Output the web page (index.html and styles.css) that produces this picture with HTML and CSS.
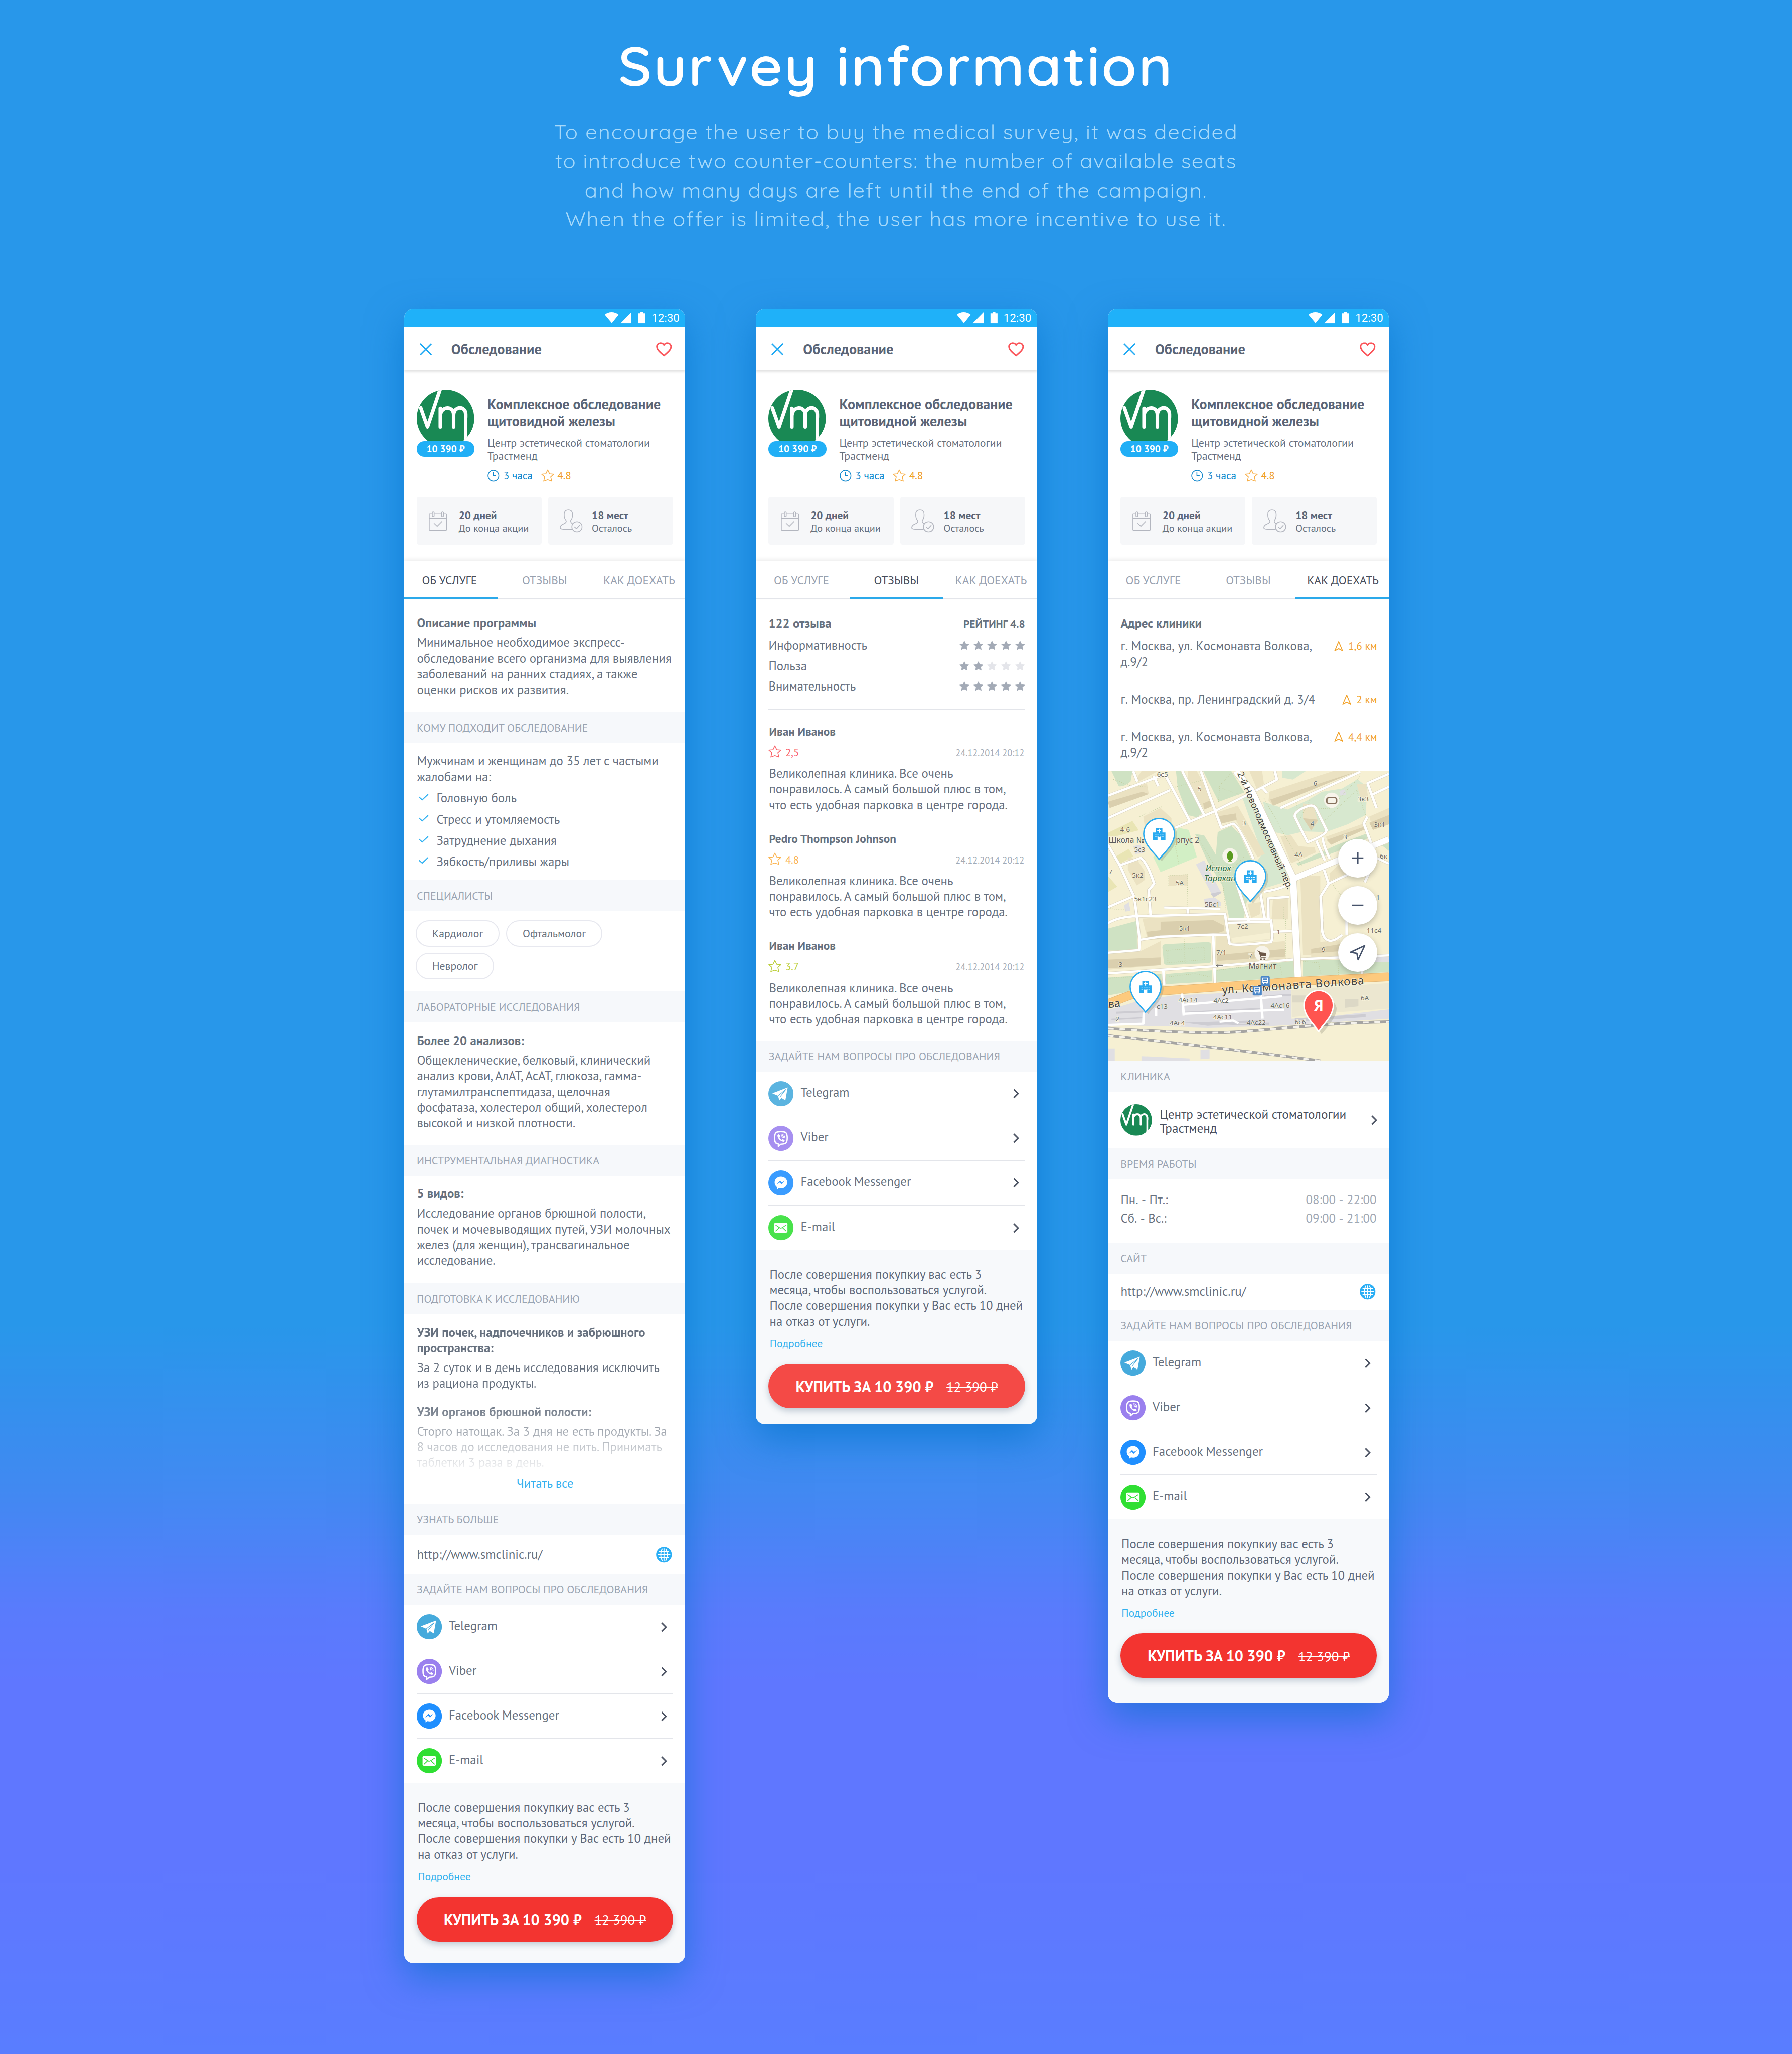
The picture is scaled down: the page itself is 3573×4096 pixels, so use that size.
FILE: index.html
```html
<!DOCTYPE html>
<html lang="ru">
<head>
<meta charset="utf-8">
<title>Survey information</title>
<link rel="stylesheet" href="styles.css">
</head>
<body>
<svg class="sprite" aria-hidden="true">
  <symbol id="i-status" viewBox="0 0 87 24"><path fill="#fff" d="M0 5.5C8-1.8 21-1.8 29.5 5.5L15 23.5ZM57 0V24H33.5ZM71.8 2.5H76.3V0h6v2.5H87V24H71.8Z"/></symbol>
  <symbol id="i-close" viewBox="0 0 26 26"><path fill="none" stroke="#1fa9f3" stroke-width="3" d="M1 1L25 25M25 1L1 25"/></symbol>
  <symbol id="i-heart" viewBox="0 0 34 31"><path fill="none" stroke="#fa5459" stroke-width="3.2" stroke-linejoin="round" d="M17 29C9 21.5 1.8 16.5 1.8 9.7A7.8 7.8 0 0 1 9.8 1.8C13 1.8 15.5 3.3 17 6C18.5 3.3 21 1.8 24.2 1.8A7.8 7.8 0 0 1 32.2 9.7C32.2 16.5 25 21.5 17 29Z"/></symbol>
  <symbol id="i-vm" viewBox="0 0 123 123"><clipPath id="disc"><circle cx="61.5" cy="61.5" r="61.5"/></clipPath><g clip-path="url(#disc)"><rect width="123" height="123" fill="#198954"/><path fill="none" stroke="#fff" stroke-width="7.6" stroke-linecap="round" stroke-linejoin="round" d="M8.5 39L23 80L51 -3M50.5 80V40M50.5 56C52 34 79 34 79 54V80M79 54C80 34 105 34 105 53V126"/><path fill="#fff" d="M101 104L124 88V123H101Z"/><path fill="#198954" d="M108.5 60H124V84L108.5 101Z"/></g></symbol>
  <symbol id="i-clock" viewBox="0 0 26 26"><circle cx="13" cy="13" r="11.8" fill="none" stroke="#1288cd" stroke-width="1.7"/><path fill="none" stroke="#1288cd" stroke-width="1.7" d="M12.5 5.5V13H18.5"/></symbol>
  <symbol id="i-star" viewBox="0 0 28 27"><path fill="none" stroke="currentColor" stroke-width="1.7" stroke-linejoin="round" d="M14 1.5L18 9.6L27 10.4L20.4 16.3L22.6 25.4L14 22.3L5.4 25.4L7.6 16.3L1 10.4L10 9.6Z"/></symbol>
  <symbol id="i-solid" viewBox="0 0 21 20"><path fill="currentColor" stroke="currentColor" stroke-linejoin="round" d="M10.5 .8L13.5 6.8L20.3 7.6L15.3 12.2L16.6 19L10.5 16.2L4.4 19L5.7 12.2L.7 7.6L7.5 6.8Z"/></symbol>
  <symbol id="i-calendar" viewBox="0 0 39 41"><g fill="none" stroke="#b3b6bf" stroke-width="1.7"><path d="M7 4.5H2Q1 4.5 1 5.5V39Q1 40 2 40H37Q38 40 38 39V5.5Q38 4.5 37 4.5H32M12 4.5H27M1 14.5H38"/><rect x="7.5" y="1" width="4" height="10" rx="2"/><rect x="27.5" y="1" width="4" height="10" rx="2"/><path d="M11 25L18 31.5L28.5 21"/></g></symbol>
  <symbol id="i-person" viewBox="0 0 49 49"><g fill="none" stroke="#b3b6bf" stroke-width="1.7" stroke-linejoin="round"><path d="M26.5 42.5H13C6 42.5 1 41.5 1 39C1 35.5 3 33 8 31C13 29 15 26 13.5 23.5C10.5 20 9.5 16 9.5 11C9.5 4 13 1 18.5 1C24 1 27.5 4 27.5 11C27.5 16 26.5 20 23.5 23.5C23 27 25 29 27.5 30.5"/><circle cx="37" cy="37" r="11"/><path d="M31.5 37L36 41L43 33.5"/></g></symbol>
  <symbol id="i-check" viewBox="0 0 21 15"><path fill="none" stroke="#35b3f2" stroke-width="2.4" d="M.6 7L7.5 13L20.3 1"/></symbol>
  <symbol id="i-chevron" viewBox="0 0 13 21"><path fill="none" stroke="#4d5464" stroke-width="3.2" d="M1.5 1.5L10.5 10.5L1.5 19.5"/></symbol>
  <symbol id="i-globe" viewBox="0 0 34 34"><circle cx="17" cy="17" r="16.8" fill="#29aef5"/><path fill="none" stroke="#fff" stroke-width="2" d="M17 3.5V30.500M3.500 17H30.500M6 10.500H28M6 23.500H28M13.500 4C9 11 9 23 13.500 30M20.500 4C25 11 25 23 20.500 30"/></symbol>
  <symbol id="i-telegram" viewBox="0 0 54 54"><circle cx="27" cy="27" r="27" fill="#45aadc"/><path fill="#fff" d="M8.500 26L41.500 13.500L36.500 41L28 36L23.500 41.500L20.800 31.500Z"/><path stroke="#45aadc" stroke-width="1.300" fill="none" d="M20.500 31.500L37.500 18L24.500 34.500"/></symbol>
  <symbol id="i-viber" viewBox="0 0 54 54"><circle cx="27" cy="27" r="27" fill="#9a80ee"/><path fill="none" stroke="#fff" stroke-width="2.800" stroke-linejoin="round" d="M27 12.500C38 12.500 40.500 15 40.500 26C40.500 36.500 38 39.500 27 39.500L21.500 44V39C15 38 13.500 35 13.500 26C13.500 15 16 12.500 27 12.500Z"/><path fill="#fff" d="M20 19.500C21.500 17.800 23 18 24 19.500L25.500 22C26 23 25 24 24 24.800C25 28 26.500 29.500 29 30.500C30 29 31 28.500 32.500 29.500L34.500 31C35.800 32 34.500 34 33 34.500C26 34 19.500 27 19.500 21Z"/><path fill="none" stroke="#fff" stroke-width="1.300" d="M27.500 18C32.500 18 35.500 21 35.500 26.500M28 20.500C31 20.500 33 22.500 33 26M28.500 23C30 23 30.500 24 30.500 25.500"/></symbol>
  <symbol id="i-messenger" viewBox="0 0 54 54"><circle cx="27" cy="27" r="27" fill="#1f8fff"/><path fill="#fff" d="M27 13.500C35 13.500 40.500 19 40.500 26C40.500 33 35 38.500 27 38.500C25.500 38.500 24 38.300 22.800 38L19 40.500L18.800 36C15.500 33.600 13.500 30 13.500 26C13.500 19 19 13.500 27 13.500Z"/><path fill="#1f8fff" d="M17.500 30L25 22L29 26L36 22L28.500 30L24.500 26Z"/></symbol>
  <symbol id="i-email" viewBox="0 0 54 54"><circle cx="27" cy="27" r="27" fill="#2fdf33"/><rect x="12.500" y="17" width="28.500" height="20.500" rx="2.500" fill="#fff"/><path fill="none" stroke="#2fdf33" stroke-width="1.700" d="M15.500 21C20 24 24 28 26.800 28C29.500 28 34 24 38.500 21M15.500 34.500L23 27.500M38.500 34.500L31 27.500"/></symbol>
  <symbol id="i-nav" viewBox="0 0 20 24"><path fill="none" stroke="#f2a32c" stroke-width="2" stroke-linejoin="round" d="M10 2L18.500 22L10 17.500L1.500 22Z"/></symbol>
  <symbol id="i-pin" viewBox="0 0 74 94"><path fill="#8a8a78" opacity=".3" d="M40 93C29 79 6 60 6 38A33 33 0 0 1 73 38C73 60 51 79 40 93Z"/><path fill="#fff" stroke="#29aaf0" stroke-width="2.800" stroke-linejoin="round" d="M34.500 89C24 75 1.500 57 1.500 34.500A33 33 0 0 1 67.500 34.500C67.500 57 45 75 34.500 89Z"/><path fill="#29aaf0" d="M21 31.500H27.500V22H41.500V31.500H48V48.500H38V42H31V48.500H21Z"/><path fill="none" stroke="#fff" stroke-width="2.200" d="M34.500 23.500V32M30.300 27.700H38.700"/><path stroke="#fff" stroke-width="1.500" stroke-dasharray="3.500 1.500" d="M25.500 37H44M25.500 41H44"/></symbol>
</svg>

<header class="hero">
  <h1 class="hero-title">Survey information</h1>
  <p class="hero-text"><span>To encourage the user to buy the medical survey, it was decided</span> <span class="snug">to introduce two counter-counters: the number of available seats</span> <span>and how many days are left until the end of the campaign.</span> <span>When the offer is limited, the user has more incentive to use it.</span></p>
</header>

<main class="phones">
  <article class="phone">
    <div class="status"><svg class="status-icons"><use href="#i-status"/></svg><span>12:30</span></div>
    <div class="appbar"><svg class="close"><use href="#i-close"/></svg><h2>Обследование</h2><svg class="heart"><use href="#i-heart"/></svg></div>
    <section class="summary">
      <div class="offer">
        <div class="brand"><svg class="brand-logo"><use href="#i-vm"/></svg><span class="price">10 390 ₽</span></div>
        <div class="offer-info"><h3>Комплексное обследование<br>щитовидной железы</h3><p>Центр эстетической стоматологии<br>Трастменд</p>
          <div class="meta"><svg class="clock"><use href="#i-clock"/></svg><span class="hours">3 часа</span><svg class="star"><use href="#i-star"/></svg><span>4.8</span></div></div>
      </div>
      <div class="stats">
        <div class="stat"><svg class="cal"><use href="#i-calendar"/></svg><div><b>20 дней</b><span>До конца акции</span></div></div>
        <div class="stat seats"><svg class="person"><use href="#i-person"/></svg><div><b>18 мест</b><span>Осталось</span></div></div>
      </div>
    </section>
    <nav class="tabs"><a class="on">ОБ УСЛУГЕ</a><a>ОТЗЫВЫ</a><a>КАК ДОЕХАТЬ</a></nav>
    <section class="block intro"><h4>Описание программы</h4><p>Минимальное необходимое экспресс-<br>обследование всего организма для выявления<br>заболеваний на ранних стадиях, а также<br>оценки рисков их развития.</p></section>
    <h5 class="band">КОМУ ПОДХОДИТ ОБСЛЕДОВАНИЕ</h5>
    <section class="block audience"><p>Мужчинам и женщинам до 35 лет с частыми<br>жалобами на:</p>
      <ul class="checks">
        <li><svg class="check"><use href="#i-check"/></svg>Головную боль</li>
        <li><svg class="check"><use href="#i-check"/></svg>Стресс и утомляемость</li>
        <li><svg class="check"><use href="#i-check"/></svg>Затруднение дыхания</li>
        <li><svg class="check"><use href="#i-check"/></svg>Зябкость/приливы жары</li>
      </ul></section>
    <h5 class="band">СПЕЦИАЛИСТЫ</h5>
    <section class="chips"><span>Кардиолог</span><span>Офтальмолог</span><span>Невролог</span></section>
    <h5 class="band">ЛАБОРАТОРНЫЕ ИССЛЕДОВАНИЯ</h5>
    <section class="block lab"><h4>Более 20 анализов:</h4><p>Общекленические, белковый, клинический<br>анализ крови, АлАТ, АсАТ, глюкоза, гамма-<br>глутамилтранспептидаза, щелочная<br>фосфатаза, холестерол общий, холестерол<br>высокой и низкой плотности.</p></section>
    <h5 class="band">ИНСТРУМЕНТАЛЬНАЯ ДИАГНОСТИКА</h5>
    <section class="block kinds"><h4>5 видов:</h4><p>Исследование органов брюшной полости,<br>почек и мочевыводящих путей, УЗИ молочных<br>желез (для женщин), трансвагинальное<br>исследование.</p></section>
    <h5 class="band">ПОДГОТОВКА К ИССЛЕДОВАНИЮ</h5>
    <section class="block prep"><div class="fade"><h4>УЗИ почек, надпочечников и забрюшного<br>пространства:</h4><p>За 2 суток и в день исследования исключить<br>из рациона продукты.</p><h4 class="second">УЗИ органов брюшной полости:</h4><p>Сторго натощак. За 3 дня не есть продукты. За<br>8 часов до исследования не пить. Принимать<br>таблетки 3 раза в день.</p></div><a class="more">Читать все</a></section>
    <h5 class="band">УЗНАТЬ БОЛЬШЕ</h5>
    <div class="site tall"><span>http://www.smclinic.ru/</span><svg class="globe"><use href="#i-globe"/></svg></div>
    <h5 class="band">ЗАДАЙТЕ НАМ ВОПРОСЫ ПРО ОБСЛЕДОВАНИЯ</h5>
    <ul class="contacts">
      <li><svg class="app"><use href="#i-telegram"/></svg><span>Telegram</span><svg class="chevron"><use href="#i-chevron"/></svg></li>
      <li><svg class="app"><use href="#i-viber"/></svg><span>Viber</span><svg class="chevron"><use href="#i-chevron"/></svg></li>
      <li><svg class="app"><use href="#i-messenger"/></svg><span>Facebook Messenger</span><svg class="chevron"><use href="#i-chevron"/></svg></li>
      <li><svg class="app"><use href="#i-email"/></svg><span>E-mail</span><svg class="chevron"><use href="#i-chevron"/></svg></li>
    </ul>
    <footer class="buy"><p>После совершения покупкиу вас есть 3<br>месяца, чтобы воспользоваться услугой.<br>После совершения покупки у Вас есть 10 дней<br>на отказ от услуги.</p><a class="details">Подробнее</a><button class="cta"><b>КУПИТЬ ЗА 10 390 ₽</b><s>12 390 ₽</s></button></footer>
  </article>

  <article class="phone short">
    <div class="status"><svg class="status-icons"><use href="#i-status"/></svg><span>12:30</span></div>
    <div class="appbar"><svg class="close"><use href="#i-close"/></svg><h2>Обследование</h2><svg class="heart"><use href="#i-heart"/></svg></div>
    <section class="summary">
      <div class="offer">
        <div class="brand"><svg class="brand-logo"><use href="#i-vm"/></svg><span class="price">10 390 ₽</span></div>
        <div class="offer-info"><h3>Комплексное обследование<br>щитовидной железы</h3><p>Центр эстетической стоматологии<br>Трастменд</p>
          <div class="meta"><svg class="clock"><use href="#i-clock"/></svg><span class="hours">3 часа</span><svg class="star"><use href="#i-star"/></svg><span>4.8</span></div></div>
      </div>
      <div class="stats">
        <div class="stat"><svg class="cal"><use href="#i-calendar"/></svg><div><b>20 дней</b><span>До конца акции</span></div></div>
        <div class="stat seats"><svg class="person"><use href="#i-person"/></svg><div><b>18 мест</b><span>Осталось</span></div></div>
      </div>
    </section>
    <nav class="tabs"><a>ОБ УСЛУГЕ</a><a class="on">ОТЗЫВЫ</a><a>КАК ДОЕХАТЬ</a></nav>
    <section class="ratings">
      <div class="rating-head"><h4>122 отзыва</h4><b>РЕЙТИНГ 4.8</b></div>
      <div class="rating"><span>Информативность</span><div class="stars"><svg><use href="#i-solid"/></svg><svg><use href="#i-solid"/></svg><svg><use href="#i-solid"/></svg><svg><use href="#i-solid"/></svg><svg><use href="#i-solid"/></svg></div></div>
      <div class="rating"><span>Польза</span><div class="stars"><svg><use href="#i-solid"/></svg><svg><use href="#i-solid"/></svg><svg class="off"><use href="#i-solid"/></svg><svg class="off"><use href="#i-solid"/></svg><svg class="off"><use href="#i-solid"/></svg></div></div>
      <div class="rating"><span>Внимательность</span><div class="stars"><svg><use href="#i-solid"/></svg><svg><use href="#i-solid"/></svg><svg><use href="#i-solid"/></svg><svg><use href="#i-solid"/></svg><svg><use href="#i-solid"/></svg></div></div>
    </section>
    <section class="reviews">
      <div class="review"><h6>Иван Иванов</h6><div class="review-meta low"><svg class="star"><use href="#i-star"/></svg><span>2,5</span><time>24.12.2014 20:12</time></div><p>Великолепная клиника. Все очень<br>понравилось. А самый большой плюс в том,<br>что есть удобная парковка в центре города.</p></div>
      <div class="review"><h6>Pedro Thompson Johnson</h6><div class="review-meta high"><svg class="star"><use href="#i-star"/></svg><span>4.8</span><time>24.12.2014 20:12</time></div><p>Великолепная клиника. Все очень<br>понравилось. А самый большой плюс в том,<br>что есть удобная парковка в центре города.</p></div>
      <div class="review"><h6>Иван Иванов</h6><div class="review-meta mid"><svg class="star"><use href="#i-star"/></svg><span>3.7</span><time>24.12.2014 20:12</time></div><p>Великолепная клиника. Все очень<br>понравилось. А самый большой плюс в том,<br>что есть удобная парковка в центре города.</p></div>
    </section>
    <h5 class="band">ЗАДАЙТЕ НАМ ВОПРОСЫ ПРО ОБСЛЕДОВАНИЯ</h5>
    <ul class="contacts">
      <li><svg class="app"><use href="#i-telegram"/></svg><span>Telegram</span><svg class="chevron"><use href="#i-chevron"/></svg></li>
      <li><svg class="app"><use href="#i-viber"/></svg><span>Viber</span><svg class="chevron"><use href="#i-chevron"/></svg></li>
      <li><svg class="app"><use href="#i-messenger"/></svg><span>Facebook Messenger</span><svg class="chevron"><use href="#i-chevron"/></svg></li>
      <li><svg class="app"><use href="#i-email"/></svg><span>E-mail</span><svg class="chevron"><use href="#i-chevron"/></svg></li>
    </ul>
    <footer class="buy"><p>После совершения покупкиу вас есть 3<br>месяца, чтобы воспользоваться услугой.<br>После совершения покупки у Вас есть 10 дней<br>на отказ от услуги.</p><a class="details">Подробнее</a><button class="cta"><b>КУПИТЬ ЗА 10 390 ₽</b><s>12 390 ₽</s></button></footer>
  </article>

  <article class="phone route">
    <div class="status"><svg class="status-icons"><use href="#i-status"/></svg><span>12:30</span></div>
    <div class="appbar"><svg class="close"><use href="#i-close"/></svg><h2>Обследование</h2><svg class="heart"><use href="#i-heart"/></svg></div>
    <section class="summary">
      <div class="offer">
        <div class="brand"><svg class="brand-logo"><use href="#i-vm"/></svg><span class="price">10 390 ₽</span></div>
        <div class="offer-info"><h3>Комплексное обследование<br>щитовидной железы</h3><p>Центр эстетической стоматологии<br>Трастменд</p>
          <div class="meta"><svg class="clock"><use href="#i-clock"/></svg><span class="hours">3 часа</span><svg class="star"><use href="#i-star"/></svg><span>4.8</span></div></div>
      </div>
      <div class="stats">
        <div class="stat"><svg class="cal"><use href="#i-calendar"/></svg><div><b>20 дней</b><span>До конца акции</span></div></div>
        <div class="stat seats"><svg class="person"><use href="#i-person"/></svg><div><b>18 мест</b><span>Осталось</span></div></div>
      </div>
    </section>
    <nav class="tabs"><a>ОБ УСЛУГЕ</a><a>ОТЗЫВЫ</a><a class="on">КАК ДОЕХАТЬ</a></nav>
    <section class="addresses"><h4>Адрес клиники</h4>
      <div class="address"><p>г. Москва, ул. Космонавта Волкова,<br>д.9/2</p><span class="km"><svg class="nav"><use href="#i-nav"/></svg>1,6 км</span></div>
      <div class="address"><p>г. Москва, пр. Ленинградский д. 3/4</p><span class="km"><svg class="nav"><use href="#i-nav"/></svg>2 км</span></div>
      <div class="address"><p>г. Москва, ул. Космонавта Волкова,<br>д.9/2</p><span class="km"><svg class="nav"><use href="#i-nav"/></svg>4,4 км</span></div>
    </section>
    <div class="map">
      <svg class="city" viewBox="10 8 1548 1862" preserveAspectRatio="none">
<rect x="10" y="8" width="1548" height="1862" fill="#f6f0d3"/>
<g fill="#cfe2c3">
<path d="M30 8H145L135 75Q100 110 70 105Z"/><path d="M385 8H412L530 280L500 305L450 290L395 120Z"/><path d="M535 8H690L762 145L620 205Z"/>
<path d="M490 412L540 420L605 545L615 400L690 360L735 410L850 700L770 860L760 960H680L640 740L560 590Z"/>
<path d="M10 1020L170 970V1150L10 1170Z"/><path d="M310 1140Q310 1122 330 1120L560 1106Q578 1108 578 1125V1225Q578 1240 560 1242L335 1254Q318 1252 318 1236Z"/>
<path d="M10 1335L305 1312V1388L130 1425L10 1450Z"/><path d="M328 1312L585 1288V1360L328 1378Z"/><path d="M606 1285L1036 1228V1335L606 1362Z"/><path d="M1085 1222L1558 1225V1300L1085 1328Z"/>
<path d="M1050 600L1270 482L1450 402V435L1270 525L1060 615Z"/><path d="M1520 485L1558 470V520Z"/>
</g>
<g fill="#d7e8cf"><path d="M750 175L800 170L1000 650L985 720L880 758L830 590L860 540Z"/><path d="M865 205L1000 255L1110 195L1190 140L1300 120L1385 60L1440 110L1430 290L1330 350L1210 400L1090 395L1000 420L930 400L880 280Z"/><path d="M970 8H1100L1030 62L970 50Z"/></g>
<path d="M260 560L400 372L455 385L500 560L300 656Z" fill="#d2efc5"/>
<path d="M10 405L145 328L180 388L60 425H10ZM55 555L125 508L150 555L80 600ZM10 680L62 750L10 785Z" fill="#e9e5b4"/>
<g fill="#ebe2c2">
<path d="M10 165L225 85L235 155L20 245ZM165 60L195 8H285L180 75Z"/><path d="M450 8H500L585 190L580 235L540 255L450 80Z"/><path d="M900 140L1250 8H1385L1270 62L920 230L895 200Z"/><path d="M790 8H860L870 90L830 120Z"/>
<path d="M607 275L725 230L875 540L835 560L715 325L635 345Z"/><path d="M1085 215L1140 225L1168 335L1130 390L1085 310Z"/><path d="M1380 90H1430L1445 180L1410 212Z"/><path d="M1450 300L1558 245V350L1470 385Z"/><path d="M1210 430L1410 348L1430 380L1240 480Z"/><path d="M960 425L1020 420L1060 490L1150 498L1155 530L1020 600Z"/><path d="M120 560L170 575L212 650L215 705L170 742L120 640Z"/><path d="M205 300L300 245L360 310V370L215 380Z"/><path d="M780 860L848 850L850 925L800 952Z"/><path d="M920 822H1002V960H912Z"/><path d="M1070 680H1180V1190H1085Z"/><path d="M200 955L650 930L660 1050L230 1095Z"/><path d="M345 678L450 670V742L345 745Z"/><path d="M1230 665L1290 600L1350 650L1235 712Z"/><path d="M605 1070L670 1065L690 1130L985 1100L990 1215L605 1250ZM10 1160L190 1165L300 1100V1255L10 1285ZM1130 1110L1290 1095V1200L1130 1205Z"/>
</g>
<g fill="#dacfae"><path d="M10 205L200 140L235 155L20 245Z"/><path d="M905 190L1385 8L1270 62L920 230Z"/><path d="M607 300L715 280L720 320L635 345Z"/><path d="M535 215L585 190L580 235L540 255Z"/><path d="M225 1040L300 1030V975L590 965L650 1000V1035L590 1058L230 1090Z"/><path d="M610 1190L990 1150L985 1200L610 1228ZM10 1220L300 1205V1255L10 1275ZM1130 1150L1290 1120V1165L1130 1180Z"/><path d="M1450 340L1558 290V350L1470 385ZM1085 310L1168 320L1130 390Z"/><path d="M1215 450L1430 362V380L1240 480Z"/></g>
<path d="M670 990L905 985L915 1090L690 1120Z" fill="#eee8cb"/><path d="M690 1080L905 1045V1085L700 1112Z" fill="#f6f0d3"/>
<g fill="#e0dfe3"><path d="M495 607L540 580L635 790L592 820Z"/><path d="M540 828L600 820L632 850V875L545 880Z"/><path d="M10 1545L180 1485L370 1450L1022 1415V1600L1200 1590L1558 1540V1600L900 1648L560 1656L300 1648L10 1640Z"/><path d="M520 1800L570 1795V1855L520 1860ZM195 1840L460 1855V1870H195ZM10 1790H48V1870H10ZM1285 135L1315 125L1322 158L1292 166ZM150 490L190 480L205 535L160 540ZM100 870L125 850L135 905L105 910ZM1470 1200L1558 1185V1235H1470Z"/></g>
<g fill="#cdccd2"><path d="M430 1555L850 1530V1542L430 1562ZM55 1555L205 1548V1560L55 1568ZM430 1625L860 1610V1620L560 1645ZM30 1600L200 1590V1598L30 1610ZM640 1640L900 1625V1640ZM870 1450L1020 1440V1452L870 1462ZM1040 1598L1430 1570V1590L1040 1620ZM575 795L635 780V790L592 820Z"/></g>
<path d="M1022 1415L1558 1370V1535L1260 1560L1025 1590Z" fill="#ece7d0"/><path d="M1025 1450H1100V1495H1025ZM1315 1475H1390V1520L1315 1530Z" fill="#dcd8c6"/>
<g class="paths"><path d="M380 110L550 60M40 60L130 100L230 110M185 300L310 235M620 205L625 100L690 20M620 110L740 160M1050 205V240L1230 250L1400 40M1060 330L1130 180M1200 330L1380 130L1430 290M870 180L1080 620M640 700L660 900M345 745V680L450 672L445 900M380 480L400 600M500 420L640 700L760 560M1250 740L1310 830M990 960V1230M1085 1230L1170 1240L1185 1320M1280 1240V1330M330 1160L540 1140V1220L340 1240V1160M430 1090L435 1240M345 1330L490 1310L570 1330M610 1290L730 1270L960 1260L970 1320M300 1400H1030M10 1340L300 1318M980 880V960M10 890L110 900"/></g>
<g class="road"><path id="streets" d="M10 165L285 45L330 25M10 310L352 130M150 8L172 75M262 38L288 105M320 20L462 330M420 8L540 290M522 8L635 372L700 345Q730 352 812 572M380 372L590 270L860 112L942 62L930 8M860 112L888 148M960 245L1400 12M1110 465L1040 300Q1036 262 1120 230Q1150 222 1162 262L1214 385Q1218 415 1110 465ZM1158 455L1206 582M1198 435Q1185 455 1232 570M1440 300L1420 345L1460 470M1440 85L1490 245M1440 85L1558 25M1460 162L1558 108M720 730L785 960M870 782Q960 765 1010 735M850 790L875 960M895 960L893 825L1010 815M10 480L75 612L155 815L172 960L185 1092L300 1072L590 1058L668 1060M78 612L190 565Q225 590 265 730L235 772L245 935M10 882L150 812M10 985Q70 942 172 940L655 925L680 1115Q690 1135 905 1108Q925 1100 908 960M320 884L630 892M450 890V922M10 1175L182 1158L185 1092M590 1058L600 1375M785 960V975M672 982L908 975M315 1288L320 1385M915 1040L1030 1035M1190 960Q1180 1092 1235 1098Q1260 1100 1300 1060M1325 960V1060M1410 1290V1320M1198 632L1226 730L1182 812L1188 960M1226 730L1350 662M1425 722L1450 655M1480 560L1558 602M670 960H905"/></g>
<use href="#streets" class="road-fill"/>
<path d="M10 1308L600 1262L1040 1218L1558 1192" class="road"/>
<path d="M10 1308L600 1262L1040 1218L1558 1192" class="road-fill"/>
<path d="M715 8L800 130L1030 690L1058 1345M1030 700L1558 445" class="avenue-case"/><path d="M715 8L800 130L1030 690L1058 1345M1030 700L1558 445" class="avenue"/>
<path d="M0 1508L130 1450Q160 1440 300 1422L1040 1360L1558 1330" class="main-case"/><path d="M0 1508L130 1450Q160 1440 300 1422L1040 1360L1558 1330" class="main"/>
<path d="M418 1438L428 1580M428 1510L970 1455M430 1568L980 1542M852 1440L862 1600M208 1560L205 1632L10 1640M275 1530V1585M625 1620L700 1612L730 1630" class="road-fill"/>
<path class="rail" d="M10 1660C300 1678 550 1695 720 1682S1200 1628 1558 1620M10 1705C300 1745 700 1795 1180 1870"/><path class="rail-dash" d="M10 1660C300 1678 550 1695 720 1682S1200 1628 1558 1620M10 1705C300 1745 700 1795 1180 1870"/>
<g class="poi"><ellipse cx="683" cy="552" rx="42" ry="49"/><ellipse cx="1243" cy="195" rx="42" ry="49"/><ellipse cx="860" cy="1180" rx="42" ry="49"/></g>
<path fill="#5a9a1e" d="M683 520Q700 530 700 555Q698 575 687 577V583H693V588H673V583H679V577Q668 575 666 555Q666 530 683 520Z"/>
<rect x="1216" y="178" width="54" height="38" rx="12" fill="none" stroke="#85705c" stroke-width="8"/>
<path fill="#6b5646" d="M832 1160L845 1164L850 1172L882 1176V1198L850 1196L858 1203H880V1207H852L841 1170ZM848 1212H858V1222H848ZM868 1212H878V1222H868Z"/>
<path fill="none" stroke="#555" stroke-width="3" d="M644 1258H608M618 1250L608 1258L618 1266"/>
<g class="house">
<text transform="translate(280 42) scale(1 1.167)">6с5</text><text transform="translate(505 137) scale(1 1.167)">5</text><text transform="translate(1142 103) scale(1 1.167)">6</text><text transform="translate(1385 200) scale(1 1.167)">3к3</text><text transform="translate(750 355) scale(1 1.167)">3</text><text transform="translate(1125 360) scale(1 1.167)">4</text><text transform="translate(1476 365) scale(1 1.167)">3к1</text><text transform="translate(1307 448) scale(1 1.167)">3</text><text transform="translate(78 398) scale(1 1.167)">4-6</text><text transform="translate(155 527) scale(1 1.167)">5с3</text><text transform="translate(143 692) scale(1 1.167)">5к2</text><text transform="translate(383 740) scale(1 1.167)">5А</text><text transform="translate(155 843) scale(1 1.167)">5к1с23</text><text transform="translate(543 880) scale(1 1.167)">5Бс1</text><text transform="translate(1038 560) scale(1 1.167)">4А</text><text transform="translate(1508 570) scale(1 1.167)">6к</text><text transform="translate(1488 832) scale(1 1.167)">1</text><text transform="translate(14 670) scale(1 1.167)">7</text><text transform="translate(722 1020) scale(1 1.167)">7с2</text><text transform="translate(402 1035) scale(1 1.167)">5к1</text><text transform="translate(940 1055) scale(1 1.167)">1</text><text transform="translate(607 1188) scale(1 1.167)">7/1</text><text transform="translate(785 1212) scale(1 1.167)">7</text><text transform="translate(1187 1170) scale(1 1.167)">9</text><text transform="translate(70 1265) scale(1 1.167)">3</text><text transform="translate(398 1493) scale(1 1.167)">4Ас14</text><text transform="translate(592 1498) scale(1 1.167)">4Ас2</text><text transform="translate(278 1538) scale(1 1.167)">с13</text><text transform="translate(907 1530) scale(1 1.167)">4Ас16</text><text transform="translate(590 1605) scale(1 1.167)">4Ас11</text><text transform="translate(350 1642) scale(1 1.167)">4Ас4</text><text transform="translate(775 1640) scale(1 1.167)">4Ас22</text><text transform="translate(1040 1635) scale(1 1.167)">6с6</text><text transform="translate(52 1618) scale(1 1.167)">2</text><text transform="translate(1403 1483) scale(1 1.167)">6А</text><text transform="translate(1435 1045) scale(1 1.167)">11с4</text>
</g>
<g class="place"><text transform="translate(14 470) scale(1 1.167)">Школа №</text><text transform="translate(384 470) scale(1 1.167)">рпус 2</text><text transform="translate(785 1278) scale(1 1.167)">Магнит</text></g>
<g class="park"><text transform="translate(548 650) scale(1 1.167)">Исток</text><text transform="translate(540 715) scale(1 1.167)">Таракан</text></g>
<g class="street"><text font-size="50" textLength="700" transform="translate(722 22) scale(1 1.167) rotate(66.500)">2-й Новоподмосковный пер.</text><text font-size="62" textLength="784" transform="translate(640 1440) scale(1 1.167) rotate(-3.900)">ул. Космонавта Волкова</text><text font-size="60" transform="translate(14 1532) scale(1 1.167) rotate(-7)">ва</text></g>
<g fill="#4a86c8"><rect x="852" y="1327" width="50" height="64" rx="6"/><rect x="808" y="1388" width="50" height="62" rx="6"/></g>
<g fill="none" stroke="#fff" stroke-width="5"><path d="M864 1338H890V1368H864ZM864 1354H890M867 1368V1378M887 1368V1378"/><path d="M820 1398H846V1428H820ZM820 1414H846M823 1428V1438M843 1428V1438"/></g>
      </svg>
      <svg class="pin p1"><use href="#i-pin"/></svg><svg class="pin p2"><use href="#i-pin"/></svg><svg class="pin p3"><use href="#i-pin"/></svg>
      <svg class="pin me" viewBox="0 0 74 96"><path fill="#8a8a78" opacity=".3" d="M40 95C29 81 8 62 8 40A33 33 0 0 1 72 40C72 62 51 81 40 95Z"/><path fill="#ff5450" stroke="#fff" stroke-width="3" stroke-linejoin="round" d="M33.500 89.500C24 76 2 57 2 34A31.500 31.500 0 0 1 65 34C65 57 43 76 33.500 89.500Z"/><text x="33.500" y="46" text-anchor="middle" class="me-label">Я</text></svg>
      <div class="controls">
        <button><svg viewBox="0 0 24 24"><path d="M12 0V24M0 12H24"/></svg></button>
        <button><svg viewBox="0 0 24 24"><path d="M0 12H24"/></svg></button>
        <button><svg class="locate" viewBox="0 0 34 34"><path d="M32 2L18 32L15.500 18.500L2 16Z"/></svg></button>
      </div>
    </div>
    <h5 class="band">КЛИНИКА</h5>
    <div class="clinic"><svg class="clinic-logo"><use href="#i-vm"/></svg><p>Центр эстетической стоматологии<br>Трастменд</p><svg class="chevron"><use href="#i-chevron"/></svg></div>
    <h5 class="band">ВРЕМЯ РАБОТЫ</h5>
    <dl class="schedule"><div><dt>Пн. - Пт.:</dt><dd>08:00 - 22:00</dd></div><div><dt>Сб. - Вс.:</dt><dd>09:00 - 21:00</dd></div></dl>
    <h5 class="band">САЙТ</h5>
    <div class="site"><span>http://www.smclinic.ru/</span><svg class="globe"><use href="#i-globe"/></svg></div>
    <h5 class="band">ЗАДАЙТЕ НАМ ВОПРОСЫ ПРО ОБСЛЕДОВАНИЯ</h5>
    <ul class="contacts">
      <li><svg class="app"><use href="#i-telegram"/></svg><span>Telegram</span><svg class="chevron"><use href="#i-chevron"/></svg></li>
      <li><svg class="app"><use href="#i-viber"/></svg><span>Viber</span><svg class="chevron"><use href="#i-chevron"/></svg></li>
      <li><svg class="app"><use href="#i-messenger"/></svg><span>Facebook Messenger</span><svg class="chevron"><use href="#i-chevron"/></svg></li>
      <li><svg class="app"><use href="#i-email"/></svg><span>E-mail</span><svg class="chevron"><use href="#i-chevron"/></svg></li>
    </ul>
    <footer class="buy"><p>После совершения покупкиу вас есть 3<br>месяца, чтобы воспользоваться услугой.<br>После совершения покупки у Вас есть 10 дней<br>на отказ от услуги.</p><a class="details">Подробнее</a><button class="cta"><b>КУПИТЬ ЗА 10 390 ₽</b><s>12 390 ₽</s></button></footer>
  </article>
</main>
</body>
</html>
```
FILE: styles.css
```css
/* 1rem = 10 design units of the 3840-unit wide artboard */
html { font-size: 9.3047px; }
*, *::before, *::after { box-sizing: border-box; margin: 0; padding: 0; }
body {
  width: 384rem; height: 440.2rem; overflow: hidden;
  font-family: "PT Sans", "Noto Sans", sans-serif; color: #67717f;
  background: linear-gradient(180deg, #2897ea 0, #2897ea 64.5%, #4289f2 72.7%, #597bfc 78.4%, #5f77ff 82%, #5f77ff 91%, #597dff 100%);
}
svg { display: block; flex: none; overflow: visible; }
.sprite { position: absolute; width: 0; height: 0; }
ul { list-style: none; }
button { border: 0; font-family: inherit; }

.hero { padding-top: 7rem; text-align: center; font-family: Quicksand, Inter, sans-serif; }
.hero-title { font-size: 11.7rem; font-weight: 600; line-height: 14rem; letter-spacing: .31rem; color: #fff; transform: scaleX(1.05); }
.hero-text { margin-top: 4.3rem; font-size: 4.2rem; font-weight: 400; line-height: 6.2rem; letter-spacing: .194rem; color: #a6d9fa; }
.hero-text span { display: block; transform: scaleX(1.07); }
.hero-text .snug { letter-spacing: .16rem; }

.phones { display: flex; align-items: flex-start; justify-content: center; gap: 15.2rem; margin-top: 16.1rem; padding-left: .2rem; }
.phone { width: 60.2rem; border-radius: 2rem; overflow: hidden; background: #fff; box-shadow: 0 3rem 8rem rgba(0, 112, 200, .62); }

.status { display: flex; align-items: center; justify-content: flex-end; gap: 1.3rem; height: 4rem; padding-right: 1.2rem; background: #1fb1f9; color: #fff; font: 2.4rem/4rem Roboto, sans-serif; }
.status-icons { width: 8.7rem; height: 2.4rem; }
.appbar { position: relative; display: flex; align-items: center; height: 9.1rem; padding: .2rem 2.8rem 0 3.3rem; box-shadow: 0 .3rem .5rem rgba(0, 0, 0, .12); }
.appbar h2 { flex: 1; margin: -.2rem 0 0 4.2rem; font-size: 3.04rem; line-height: 3.6rem; color: #5b6577; }
.close { width: 2.6rem; height: 2.6rem; }
.heart { width: 3.4rem; height: 3.1rem; }

.summary { padding: 4.2rem 2.55rem 3.42rem 2.7rem; }
.offer { display: flex; }
.brand { display: flex; flex-direction: column; width: 12.4rem; }
.brand-logo { width: 12.3rem; height: 12.3rem; }
.price { position: relative; height: 3.3rem; margin-top: -1.2rem; border-radius: 1.65rem; background: #21aff6; color: #fff; font-size: 2.1rem; font-weight: 700; line-height: 3.2rem; text-align: center; }
.offer-info { margin: 1.3rem 0 0 2.77rem; }
.offer-info h3 { font-size: 3.01rem; line-height: 3.67rem; color: #5b6577; white-space: nowrap; }
.offer-info p { margin-top: 1.4rem; font-size: 2.35rem; line-height: 2.8rem; }
.meta { display: flex; align-items: center; margin-top: 1.4rem; font-size: 2.28rem; line-height: 2.8rem; color: #f0a029; }
.clock { width: 2.55rem; height: 2.55rem; margin-right: .85rem; }
.hours { margin-right: 1.8rem; color: #1288cd; }
.star { width: 2.8rem; height: 2.7rem; margin-right: .7rem; }
.meta .star { color: #f8ae45; }
.stats { display: grid; grid-template-columns: 1fr 1fr; gap: 1.4rem; margin-top: 3.22rem; }
.stat { display: flex; align-items: center; height: 10.15rem; padding-left: 2.6rem; border-radius: .5rem; background: #f6f7f9; }
.cal { width: 3.9rem; height: 4.1rem; margin-right: 2.5rem; }
.stat.seats { padding-left: 2.45rem; }
.person { width: 4.9rem; height: 4.9rem; margin-right: 2rem; }
.stat div { margin-top: .25rem; }
.stat b { display: block; font-size: 2.3rem; line-height: 2.8rem; color: #5b6577; }
.stat span { display: block; font-size: 2.17rem; line-height: 2.7rem; }

.tabs { display: grid; grid-template-columns: 1fr 1fr 1fr; height: 8.24rem; border-bottom: .15rem solid #e3e5ea; box-shadow: 0 -.3rem .8rem rgba(0, 0, 0, .07); font-size: 2.5rem; line-height: 8.3rem; text-align: center; color: #98a1b0; }
.tabs a:first-child { padding-right: .6rem; }
.tabs a:last-child { padding-left: .4rem; }
.tabs .on { height: 8.24rem; border-bottom: .35rem solid #2ba9ea; color: #474d5b; }

h4 { font-size: 2.67rem; line-height: 3.35rem; color: #67717f; }
.block { padding: 0 2.6rem 0 2.75rem; font-size: 2.67rem; line-height: 3.35rem; white-space: nowrap; }
.block h4 + p { margin-top: .84rem; }
.intro { padding-top: 3.55rem; padding-bottom: 3.14rem; }
.intro h4 + p { margin-top: .85rem; }
.band { height: 6.68rem; padding-left: 2.72rem; background: #f6f8fb; color: #9aa4b2; font-size: 2.36rem; font-weight: 400; line-height: 6.68rem; }
.audience { padding-top: 2.15rem; padding-bottom: 1.7rem; }
.checks { margin-top: .6rem; line-height: 4.54rem; }
.checks li { display: flex; align-items: center; gap: 1.7rem; padding-left: .4rem; }
.check { width: 2.1rem; height: 1.5rem; margin-top: -.4rem; }
.chips { display: flex; flex-wrap: wrap; gap: 1.38rem; padding: 1.9rem 2.5rem 2.54rem; }
.chips span { height: 5.66rem; padding: 0 3.32rem; border: .22rem solid #e7e8ef; border-radius: 2.83rem; font-size: 2.34rem; line-height: 5.3rem; }
.lab { padding-top: 2.3rem; padding-bottom: 2.95rem; }
.kinds { padding-top: 2.22rem; padding-bottom: 3.2rem; }
.prep { padding-top: 2.27rem; padding-bottom: 2.65rem; }
.prep .second { margin-top: 2.7rem; }
.fade { -webkit-mask-image: linear-gradient(#000 52%, rgba(0, 0, 0, .12) 98%); mask-image: linear-gradient(#000 52%, rgba(0, 0, 0, .12) 98%); }
.more { display: block; margin-top: 1.2rem; text-align: center; color: #36b1f0; }
.site { display: flex; align-items: center; justify-content: space-between; height: 7.8rem; padding: 0 2.85rem 0 2.75rem; font-size: 2.68rem; }
.site span { margin-top: -.25rem; }
.site.tall { height: 8.28rem; }
.globe { width: 3.4rem; height: 3.4rem; }

.contacts { padding: 0 2.55rem 0 2.7rem; font-size: 2.67rem; }
.contacts li { display: flex; align-items: center; height: 9.56rem; border-bottom: .15rem solid #e3e5ea; }
.contacts li:last-child { height: 9.52rem; border: 0; }
.contacts .app { width: 5.4rem; height: 5.4rem; margin-right: 1.48rem; }
.contacts span { flex: 1; margin-top: -.6rem; }
.chevron { width: 1.3rem; height: 2.1rem; }
.contacts .chevron { margin-right: 1.3rem; }

.buy { padding: 3.55rem 2.55rem 4.7rem 2.7rem; background: #f7f9fb; font-size: 2.665rem; line-height: 3.36rem; color: #5f697a; white-space: nowrap; }
.buy p { padding-left: .22rem; }
.details { display: block; margin: 1.6rem 0 2.85rem .25rem; font-size: 2.32rem; line-height: 3rem; color: #33b1ee; }
.cta { display: flex; align-items: center; justify-content: center; gap: 2.75rem; width: 100%; height: 9.5rem; border-radius: 4.75rem; background: #f33430; color: #fff; box-shadow: 0 .6rem 1.4rem rgba(60, 90, 120, .3); }
.cta b { font-size: 3.26rem; }
.cta s { margin-top: .2rem; font-size: 2.9rem; }
.short .buy { padding-bottom: 3.4rem; }
.short .app { opacity: .88; }
.short .cta { background: #f44a46; }
.route .buy { padding-bottom: 5.45rem; }

.ratings { margin: 0 2.55rem 0 2.7rem; padding: 3.6rem 0 2.65rem; border-bottom: .15rem solid #e3e5ea; font-size: 2.66rem; line-height: 4.36rem; }
.rating-head, .rating { display: flex; justify-content: space-between; align-items: center; }
.rating-head { height: 3.35rem; margin-bottom: .9rem; }
.rating-head b { margin-top: .3rem; font-size: 2.32rem; }
.stars { display: flex; gap: .9rem; color: #a3aab6; }
.stars svg { width: 2.1rem; height: 2rem; }
.stars .off { color: #e4e5ea; }
.reviews { padding: 3.15rem 2.7rem 2.9rem 2.8rem; }
.review + .review { margin-top: 3.97rem; }
.review h6 { font-size: 2.5rem; line-height: 3.2rem; color: #67717f; }
.review-meta { display: flex; align-items: center; margin: 1.53rem 0 1.42rem -.1rem; font-size: 2.24rem; line-height: 2.8rem; }
.review-meta .star { margin-top: -.5rem; margin-right: .8rem; }
.review-meta time { margin-left: auto; font-size: 1.98rem; color: #a3abb6; }
.low { color: #fa6268; }
.high { color: #fbb451; }
.mid { color: #bccf3a; }
.review p { font-size: 2.67rem; line-height: 3.35rem; white-space: nowrap; }

.addresses { padding: 3.6rem 2.55rem 2.35rem 2.75rem; }
.addresses h4 { margin-bottom: 1.55rem; font-size: 2.65rem; }
.address { display: flex; justify-content: space-between; padding-bottom: 2.2rem; font-size: 2.67rem; line-height: 3.35rem; font-kerning: none; border-bottom: .15rem solid #e0e5ee; }
.address + .address { padding-top: 2.35rem; }
.address:last-child { padding-bottom: 0; border: 0; }
.km { display: flex; align-items: center; gap: 1.1rem; height: 3.35rem; font-size: 2.28rem; color: #f2a32c; }
.nav { width: 1.95rem; height: 2.35rem; }

.map { position: relative; height: 62.06rem; overflow: hidden; }
.city { width: 100%; height: 100%; overflow: hidden; }
.paths { fill: none; stroke: #c3cfa2; stroke-width: 4; stroke-dasharray: 4 8; }
.road { fill: none; stroke: #dcd5c0; stroke-width: 19; stroke-linejoin: round; }
.road-fill { fill: none; stroke: #fff; stroke-width: 14; stroke-linejoin: round; }
.avenue-case { fill: none; stroke: #dcd5c0; stroke-width: 42; }
.avenue { fill: none; stroke: #fff; stroke-width: 36; }
.main-case { fill: none; stroke: #e3b777; stroke-width: 56; }
.main { fill: none; stroke: #fdca7e; stroke-width: 50; }
.rail { fill: none; stroke: #a5a4a2; stroke-width: 18; }
.rail-dash { fill: none; stroke: #f4f2ec; stroke-width: 12; stroke-dasharray: 32 32; }
.poi { fill: #f7f4ea; }
.city text { font-family: "Noto Sans", sans-serif; paint-order: stroke; stroke: #f8f3dd; stroke-width: 4; }
.house { font-size: 37px; fill: #6d6c66; }
.place { font-size: 43px; fill: #5d5d5a; }
.park { font-size: 46px; font-style: italic; fill: #2f7048; }
.street { fill: #454545; }
.pin { position: absolute; width: 7.4rem; height: 9.4rem; }
.p1 { left: 7.5rem; top: 10rem; }
.p2 { left: 27.1rem; top: 19.05rem; }
.p3 { left: 4.65rem; top: 42.75rem; }
.me { left: 41.8rem; top: 46.8rem; height: 9.6rem; }
.me-label { font: 700 34px "PT Sans", sans-serif; fill: #fff; }
.controls { position: absolute; right: 2.5rem; top: 14.5rem; display: flex; flex-direction: column; gap: 1.75rem; }
.controls button { display: flex; align-items: center; justify-content: center; width: 8.35rem; height: 8.35rem; border-radius: 50%; background: #fff; box-shadow: 0 .4rem 1.2rem rgba(60, 60, 60, .3); }
.controls svg { width: 2.4rem; height: 2.4rem; fill: none; stroke: #46536b; stroke-width: 3; stroke-linejoin: round; }
.controls .locate { width: 3.4rem; height: 3.4rem; }

.clinic { display: flex; align-items: center; height: 12.1rem; padding: 0 2.5rem 0 2.65rem; color: #4a505d; font-size: 2.7rem; line-height: 3rem; }
.clinic p { flex: 1; margin: .5rem 0 0 1.7rem; }
.clinic-logo { width: 6.75rem; height: 6.75rem; }
.schedule { padding: 2.35rem 2.65rem 3.16rem 2.75rem; font-size: 2.66rem; line-height: 4rem; font-kerning: none; }
.schedule div { display: flex; justify-content: space-between; }
.schedule dd { color: #a0a8b4; }
```
